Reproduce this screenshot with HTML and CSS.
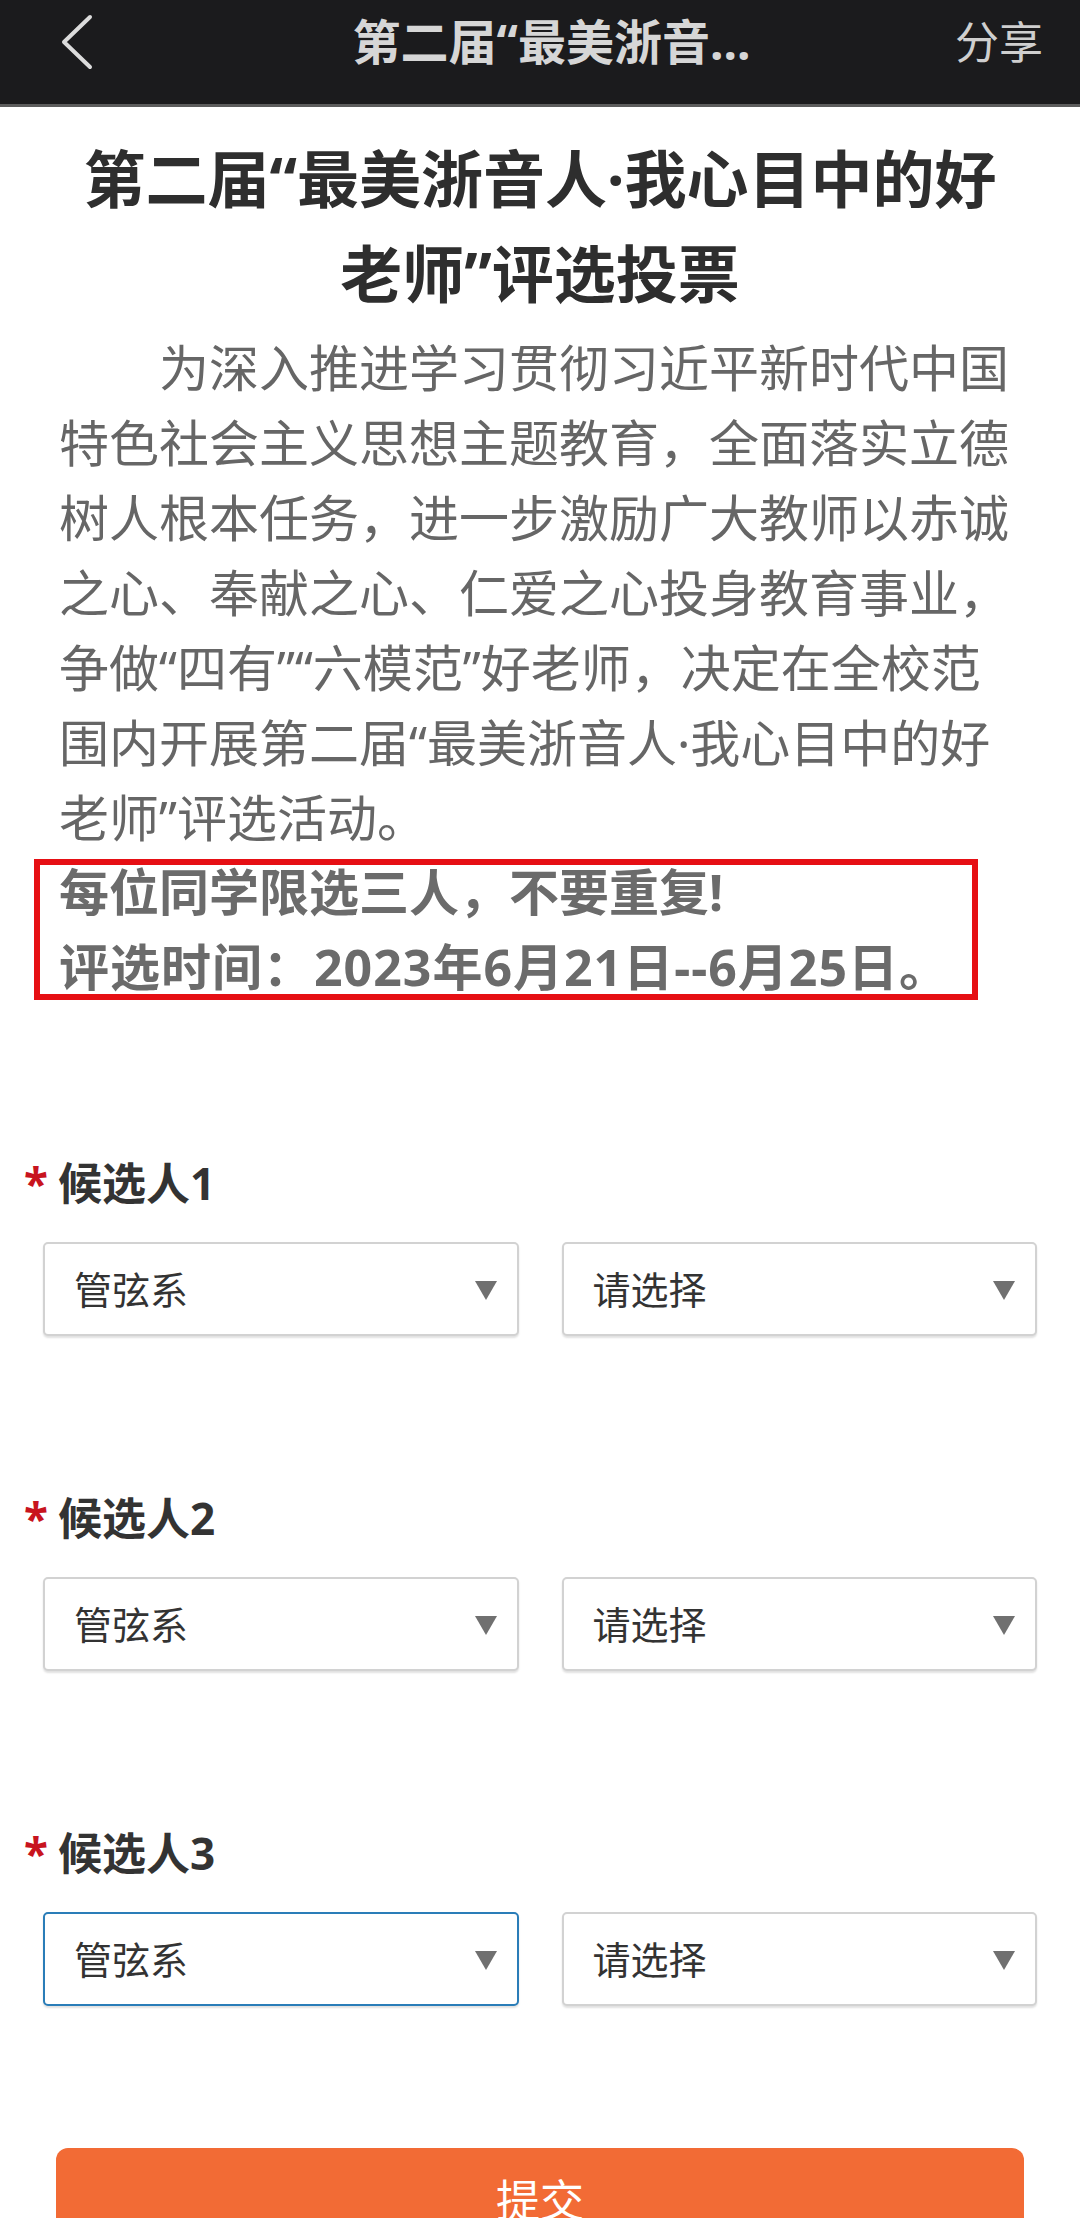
FILE: index.html
```html
<!DOCTYPE html>
<html lang="zh-CN">
<head>
    <meta charset="UTF-8">
    <meta name="viewport" content="width=device-width, initial-scale=1.0">
    <link rel="stylesheet" href="styles.css">
    <title>第二届“最美浙音人·我心目中的好老师”评选投票</title>
</head>
<body>
    <div class="topbar">
        <a class="back" href="#">
            <svg width="34" height="56" viewBox="0 0 34 56">
                <polyline points="30,3 4,28 30,53" fill="none" stroke="#dcdcdc" stroke-width="4" stroke-linecap="round" stroke-linejoin="round"/>
            </svg>
        </a>
        <div class="topbar-title">第二届“最美浙音...</div>
        <div class="share">分享</div>
    </div>

    <div class="page">
        <h1>第二届“最美浙音人·我心目中的好老师”评选投票</h1>
        <p class="intro">为深入推进学习贯彻习近平新时代中国特色社会主义思想主题教育，全面落实立德树人根本任务，进一步激励广大教师以赤诚之心、奉献之心、仁爱之心投身教育事业，争做“四有”“六模范”好老师，决定在全校范围内开展第二届“最美浙音人·我心目中的好老师”评选活动。</p>
        <div class="notice">
            <div>每位同学限选三人，不要重复!</div>
            <div class="notice-date">评选时间：2023年6月21日--6月25日。</div>
        </div>
    </div>

    <form class="vote-form">
        <div class="field">
            <div class="field-label"><span class="req">*</span>候选人1</div>
            <div class="field-row">
                <div class="select-wrap"><select><option>管弦系</option></select></div>
                <div class="select-wrap"><select><option>请选择</option></select></div>
            </div>
        </div>
        <div class="field">
            <div class="field-label"><span class="req">*</span>候选人2</div>
            <div class="field-row">
                <div class="select-wrap"><select><option>管弦系</option></select></div>
                <div class="select-wrap"><select><option>请选择</option></select></div>
            </div>
        </div>
        <div class="field">
            <div class="field-label"><span class="req">*</span>候选人3</div>
            <div class="field-row">
                <div class="select-wrap"><select class="is-focused"><option>管弦系</option></select></div>
                <div class="select-wrap"><select><option>请选择</option></select></div>
            </div>
        </div>
        <button type="button" class="submit">提交</button>
    </form>
</body>
</html>
```

FILE: styles.css
```css
body {
    margin: 0;
    font-family: "Noto Sans", "Noto Sans CJK SC", sans-serif;
    background-color: #fff;
    color: #333;
}

.topbar {
    display: grid;
    grid-template-columns: 1fr auto 1fr;
    align-items: start;
    height: 107px;
    padding: 12px 37px 0 60px;
    box-sizing: border-box;
    background-color: #1b1b1d;
    border-bottom: 3px solid #5c5c5c;
}

.back {
    display: flex;
    align-items: center;
    height: 60px;
}

.topbar-title {
    font-size: 48px;
    font-weight: bold;
    line-height: 60px;
    color: #d6d6d6;
}

.share {
    justify-self: end;
    font-size: 44px;
    line-height: 60px;
    color: #cfcfcf;
}

.page {
    padding: 0 59px;
}

h1 {
    margin: 25px 20px 0;
    font-size: 62px;
    line-height: 95px;
    text-align: center;
    color: #2e2e2e;
}

.intro {
    margin: 9px 0 0;
    font-size: 50px;
    line-height: 75px;
    text-indent: 2em;
    color: #666;
}

.notice {
    display: flex;
    flex-direction: column;
    gap: 21px;
    width: 944px;
    box-sizing: border-box;
    margin: 3px 0 0 -25px;
    padding: 0 19px;
    border: 6px solid #e60f14;
    font-size: 50px;
    font-weight: bold;
    line-height: 54px;
    color: #6b6b6b;
}

.notice-date {
    letter-spacing: 1px;
}

.vote-form {
    padding: 0 43px;
}

.field {
    margin-top: 152px;
}

.field:first-child {
    margin-top: 153px;
}

.field-label {
    margin: 0 0 29px -19px;
    font-size: 44px;
    font-weight: bold;
    line-height: 60px;
    color: #333;
}

.req {
    display: inline-block;
    width: 34px;
    vertical-align: top;
    color: #c8141e;
}

.field-row {
    display: grid;
    grid-template-columns: 1fr 1fr;
    gap: 43px;
}

.select-wrap {
    position: relative;
}

.select-wrap::after {
    content: "";
    position: absolute;
    right: 22px;
    top: 50%;
    margin-top: -8px;
    border-left: 11px solid transparent;
    border-right: 11px solid transparent;
    border-top: 19px solid #707070;
    pointer-events: none;
}

select {
    appearance: none;
    -webkit-appearance: none;
    width: 100%;
    height: 94px;
    padding: 0 0 0 29px;
    border: 2px solid #d2d2d2;
    border-radius: 5px;
    box-shadow: 0 2px 2px rgba(0, 0, 0, 0.12);
    background-color: #fff;
    font-family: inherit;
    font-size: 38px;
    color: #333;
    outline: none;
}

select.is-focused {
    border-color: #2a7db8;
}

.submit {
    display: block;
    width: calc(100% - 26px);
    height: 100px;
    margin: 142px 13px 0;
    border: none;
    border-radius: 12px;
    background-color: #f26b35;
    font-family: inherit;
    font-size: 44px;
    color: #fff;
    cursor: pointer;
}
```
